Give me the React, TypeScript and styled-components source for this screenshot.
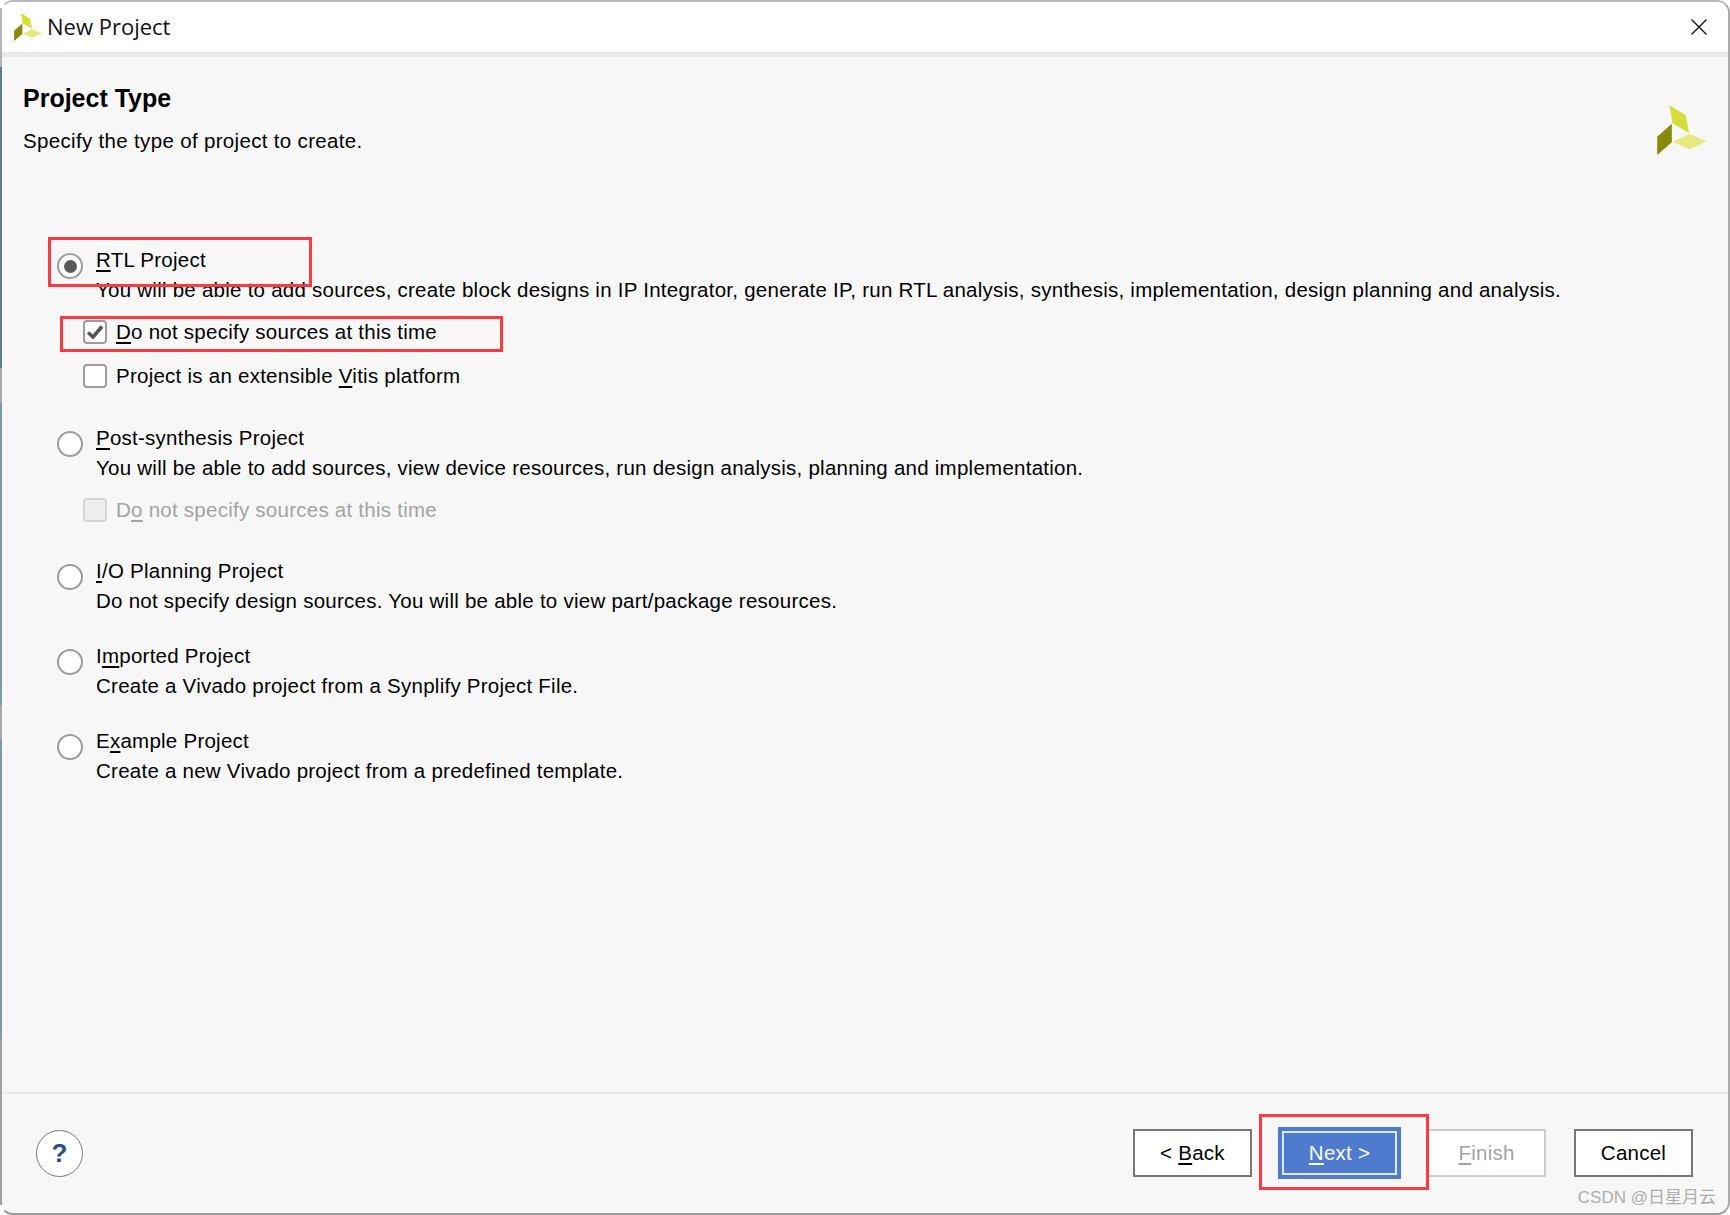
import styled, { createGlobalStyle } from "styled-components";

const GlobalStyle = createGlobalStyle`
  html, body {
    margin: 0;
    padding: 0;
    background: #fff;
  }
  * {
    box-sizing: border-box;
  }
`;

const Frame = styled.div`
  width: 1730px;
  height: 1215px;
  overflow: hidden;
  font-family: "Liberation Sans", Arial, sans-serif;
  color: #000;
  background-color: #fff;
  background-image: linear-gradient(
    to bottom,
    #fff 0 8px,
    #b5b5b5 8px 67px,
    #5f7f80 67px 368px,
    #a9a9a9 368px 403px,
    #7f99a8 403px 705px,
    #a9a9a9 705px 740px,
    #7f99a8 740px 1039px,
    #a0a0a0 1039px 1205px,
    #fff 1205px
  );
  background-size: 2px 100%;
  background-repeat: no-repeat;
`;

const Window = styled.div`
  position: relative;
  width: 100%;
  height: 100%;
  display: flex;
  flex-direction: column;
  border-style: solid;
  border-width: 2px;
  border-color: #b9b9b9 #ababab #999 transparent;
  border-radius: 13px;
  background: #f7f7f7;
  background-clip: padding-box;
  overflow: hidden;
`;

const TitleBar = styled.header`
  flex: none;
  height: 50px;
  display: flex;
  align-items: center;
  padding: 0 20px 0 12px;
  background: #fff;
`;

const TitleText = styled.span`
  margin: -3px 0 0 5px;
  font-family: "Open Sans", "Liberation Sans", sans-serif;
  font-size: 22px;
  color: #111;
`;

const CloseButton = styled.button`
  margin-left: auto;
  width: 18px;
  height: 18px;
  padding: 0;
  border: 0;
  background: none;
  display: flex;
`;

const TitleDivider = styled.div`
  flex: none;
  height: 5px;
  background: #e8e8e8;
`;

const Body = styled.main`
  flex: 1;
  position: relative;
  padding: 26px 0 0 21px;
`;

const Heading = styled.h1`
  margin: 0;
  font-size: 25px;
  font-weight: 700;
  line-height: 30px;
`;

const Subtitle = styled.p`
  margin: 15px 0 0;
  font-size: 20.5px;
  line-height: 26px;
  letter-spacing: 0.33px;
`;

const BrandLogo = styled.div`
  position: absolute;
  top: 48px;
  right: 21px;
  display: flex;
`;

const Options = styled.div`
  margin: 93px 0 0 34px;
  display: flex;
  flex-direction: column;
`;

const OptionRow = styled.div<{ $top: number }>`
  margin-top: ${(p) => p.$top}px;
  display: flex;
  gap: 13px;
`;

const OptionText = styled.div`
  display: flex;
  flex-direction: column;
  gap: 4px;
`;

const Label = styled.span<{ $disabled?: boolean }>`
  font-size: 20.5px;
  line-height: 26px;
  letter-spacing: 0.25px;
  white-space: nowrap;
  color: ${(p) => (p.$disabled ? "#a3a3a3" : "#000")};
`;

const Key = styled.span`
  text-decoration: underline;
  text-decoration-thickness: 1.5px;
  text-underline-offset: 3px;
`;

const Radio = styled.span<{ $checked?: boolean }>`
  flex: none;
  width: 26px;
  height: 26px;
  margin-top: 6px;
  border-radius: 50%;
  border: 2px solid #9c9c9c;
  background: #fff;
  display: flex;
  align-items: center;
  justify-content: center;
  &::after {
    content: "";
    width: 13px;
    height: 13px;
    border-radius: 50%;
    background: ${(p) => (p.$checked ? "#595959" : "transparent")};
  }
`;

const CheckRow = styled.div<{ $top: number }>`
  margin: ${(p) => p.$top}px 0 0 26px;
  height: 26px;
  display: flex;
  align-items: center;
  gap: 9px;
`;

const CheckBox = styled.span<{ $disabled?: boolean }>`
  flex: none;
  width: 24px;
  height: 24px;
  border-radius: 4px;
  border: 2px solid ${(p) => (p.$disabled ? "#d6d6d6" : "#9c9c9c")};
  background: ${(p) => (p.$disabled ? "#eeeeee" : "#fff")};
  display: flex;
  align-items: center;
  justify-content: center;
`;

const Footer = styled.footer`
  flex: none;
  height: 121px;
  border-top: 2px solid #e8e8e8;
  display: flex;
  align-items: center;
  padding: 0 35px 1px 34px;
`;

const HelpButton = styled.button`
  width: 47px;
  height: 47px;
  margin-right: auto;
  padding: 0;
  border: 1px solid #777;
  border-radius: 50%;
  background: #fff;
  color: #2a4d8f;
  font-family: "Liberation Sans", Arial, sans-serif;
  font-size: 26px;
  font-weight: 700;
`;

const Button = styled.button<{ $disabled?: boolean; $gap?: number }>`
  width: 119px;
  height: 48px;
  margin-left: ${(p) => p.$gap ?? 0}px;
  padding: 0;
  border: 2px solid ${(p) => (p.$disabled ? "#cccccc" : "#777")};
  background: #fff;
  color: ${(p) => (p.$disabled ? "#a3a3a3" : "#000")};
  font-family: "Liberation Sans", Arial, sans-serif;
  font-size: 20.5px;
  letter-spacing: 0.25px;
`;

const PrimaryButton = styled(Button)`
  width: 123px;
  height: 52px;
  border: 4px solid #4f7bcf;
  background: #4f7bcf;
  color: #fff;
  box-shadow: inset 0 0 0 2px #dfe8f8;
`;

const RedBox = styled.div<{ $x: number; $y: number; $w: number; $h: number }>`
  position: absolute;
  left: ${(p) => p.$x}px;
  top: ${(p) => p.$y}px;
  width: ${(p) => p.$w}px;
  height: ${(p) => p.$h}px;
  border: 3px solid #f93c41;
  pointer-events: none;
`;

const Watermark = styled.span`
  position: absolute;
  right: 12px;
  bottom: 5px;
  font-family: "Liberation Sans", "Noto Sans CJK SC", sans-serif;
  font-size: 17px;
  line-height: 20px;
  color: #adadad;
`;

const Logo = ({ size }: { size: number }) => (
  <svg width={size} height={size} viewBox="171 315 149 150">
    <polygon points="207,315 257,346 267,400 217,370" fill="#d6df3a" />
    <polygon points="215,371 215,427 171,465 171,410" fill="#8a8a0a" />
    <polygon points="267,402 320,424 268,448 217,426" fill="#e6ea7e" />
  </svg>
);

const CheckMark = () => (
  <svg width="18" height="16" viewBox="0 0 18 16">
    <path d="M2 8.5 L7 13 L16 2.5" fill="none" stroke="#555" strokeWidth="3.6" />
  </svg>
);

const CloseIcon = () => (
  <svg width="18" height="18" viewBox="0 0 18 18">
    <path d="M1.5 1.5 L16.5 16.5 M16.5 1.5 L1.5 16.5" stroke="#111" strokeWidth="1.4" fill="none" />
  </svg>
);

const App = () => {
  return (
    <Frame>
      <GlobalStyle />
      <Window>
        <TitleBar>
          <Logo size={28} />
          <TitleText>New Project</TitleText>
          <CloseButton>
            <CloseIcon />
          </CloseButton>
        </TitleBar>
        <TitleDivider />
        <Body>
          <Heading>Project Type</Heading>
          <Subtitle>Specify the type of project to create.</Subtitle>
          <BrandLogo>
            <Logo size={50} />
          </BrandLogo>
          <Options>
            <OptionRow $top={0}>
              <Radio $checked />
              <OptionText>
                <Label>
                  <Key>R</Key>TL Project
                </Label>
                <Label>
                  You will be able to add sources, create block designs in IP Integrator, generate IP, run RTL
                  analysis, synthesis, implementation, design planning and analysis.
                </Label>
              </OptionText>
            </OptionRow>
            <CheckRow $top={16}>
              <CheckBox>
                <CheckMark />
              </CheckBox>
              <Label>
                <Key>D</Key>o not specify sources at this time
              </Label>
            </CheckRow>
            <CheckRow $top={18}>
              <CheckBox />
              <Label>
                Project is an extensible <Key>V</Key>itis platform
              </Label>
            </CheckRow>

            <OptionRow $top={36}>
              <Radio />
              <OptionText>
                <Label>
                  <Key>P</Key>ost-synthesis Project
                </Label>
                <Label>
                  You will be able to add sources, view device resources, run design analysis, planning and
                  implementation.
                </Label>
              </OptionText>
            </OptionRow>
            <CheckRow $top={16}>
              <CheckBox $disabled />
              <Label $disabled>
                D<Key>o</Key> not specify sources at this time
              </Label>
            </CheckRow>

            <OptionRow $top={35}>
              <Radio />
              <OptionText>
                <Label>
                  <Key>I</Key>/O Planning Project
                </Label>
                <Label>Do not specify design sources. You will be able to view part/package resources.</Label>
              </OptionText>
            </OptionRow>

            <OptionRow $top={29}>
              <Radio />
              <OptionText>
                <Label>
                  I<Key>m</Key>ported Project
                </Label>
                <Label>Create a Vivado project from a Synplify Project File.</Label>
              </OptionText>
            </OptionRow>

            <OptionRow $top={29}>
              <Radio />
              <OptionText>
                <Label>
                  E<Key>x</Key>ample Project
                </Label>
                <Label>Create a new Vivado project from a predefined template.</Label>
              </OptionText>
            </OptionRow>
          </Options>
        </Body>
        <Footer>
          <HelpButton>?</HelpButton>
          <Button>
            &lt; <Key>B</Key>ack
          </Button>
          <PrimaryButton $gap={26}>
            <Key>N</Key>ext &gt;
          </PrimaryButton>
          <Button $disabled $gap={26}>
            <Key>F</Key>inish
          </Button>
          <Button $gap={28}>Cancel</Button>
        </Footer>
        <RedBox $x={46} $y={235} $w={264} $h={50} />
        <RedBox $x={58} $y={314} $w={443} $h={36} />
        <RedBox $x={1257} $y={1112} $w={170} $h={76} />
        <Watermark>CSDN @日星月云</Watermark>
      </Window>
    </Frame>
  );
};

export default App;
